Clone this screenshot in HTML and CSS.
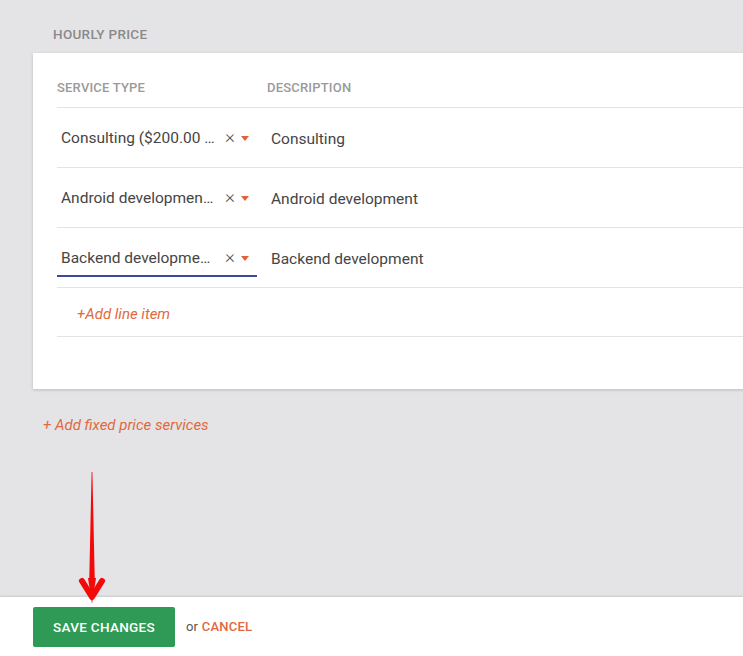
FILE: index.html
```html
<!DOCTYPE html>
<html>
<head>
<meta charset="utf-8">
<link rel="stylesheet" href="styles.css">
</head>
<body>
<div class="page">
  <div class="section-title">HOURLY PRICE</div>
  <div class="card">
    <div class="thead">
      <div class="col-type">SERVICE TYPE</div>
      <div class="col-desc">DESCRIPTION</div>
    </div>
    <div class="row">
      <div class="col-type">
        <div class="select"><span class="sel-text">Consulting ($200.00 …</span><span class="clear">×</span><span class="caret"></span></div>
      </div>
      <div class="col-desc"><span class="desc">Consulting</span></div>
    </div>
    <div class="row">
      <div class="col-type">
        <div class="select"><span class="sel-text">Android developmen…</span><span class="clear">×</span><span class="caret"></span></div>
      </div>
      <div class="col-desc"><span class="desc">Android development</span></div>
    </div>
    <div class="row">
      <div class="col-type">
        <div class="select focused"><span class="sel-text">Backend developme…</span><span class="clear">×</span><span class="caret"></span></div>
      </div>
      <div class="col-desc"><span class="desc">Backend development</span></div>
    </div>
    <div class="add-row"><a class="link">+Add line item</a></div>
  </div>
  <div class="add-fixed"><a class="link">+ Add fixed price services</a></div>
</div>
<svg class="arrow" width="30" height="140" viewBox="0 0 30 140">
  <path d="M14.6 2 L15.4 2 L17.8 112 L12.2 112 Z" fill="#f20a0a"/>
  <path d="M5 111 L15 127 L25 111" fill="none" stroke="#f20a0a" stroke-width="6" stroke-linecap="round" stroke-linejoin="round"/>
  <path d="M11 108 L19 108 L15 134 Z" fill="#f20a0a"/>
</svg>
<div class="footer">
  <button class="save">SAVE CHANGES</button>
  <span class="or">or</span>
  <a class="cancel">CANCEL</a>
</div>
</body>
</html>
```
FILE: styles.css
```css
html, body {
  margin: 0;
  padding: 0;
}
body {
  background: #e4e4e6;
  font-family: Roboto, "Noto Sans", sans-serif;
  height: 656px;
  overflow: hidden;
  position: relative;
}
.page {
  padding-left: 33px;
}
.section-title {
  height: 53px;
  box-sizing: border-box;
  padding: 26px 0 0 20px;
  font-size: 13.5px;
  font-weight: 500;
  color: #8a8a8a;
  letter-spacing: 0.3px;
}
.card {
  width: 740px;
  background: #fff;
  box-shadow: 0 1px 3px rgba(0, 0, 0, 0.18);
  padding: 0 0 52px 24px;
  box-sizing: border-box;
}
.thead {
  display: flex;
  align-items: flex-end;
  height: 55px;
  box-sizing: border-box;
  padding-bottom: 12px;
  font-size: 13px;
  font-weight: 500;
  color: #9a9a9a;
  letter-spacing: 0.2px;
  border-bottom: 1px solid #e3e3e3;
}
.col-type {
  width: 210px;
  flex: none;
}
.col-desc {
  flex: 1;
}
.row {
  display: flex;
  align-items: center;
  height: 60px;
  border-bottom: 1px solid #e3e3e3;
  box-sizing: border-box;
  font-size: 15.5px;
  color: #454545;
  padding-top: 3px;
}
.select {
  width: 200px;
  height: 36px;
  box-sizing: border-box;
  display: flex;
  align-items: center;
  padding: 0 8px 0 4px;
  border-bottom: 2px solid transparent;
}
.select.focused {
  border-bottom-color: #3d4a9c;
}
.sel-text {
  flex: 1;
  white-space: nowrap;
  overflow: hidden;
}
.clear {
  width: 14px;
  text-align: center;
  color: #555;
  font-size: 19px;
  font-weight: 300;
  margin-right: 4px;
  margin-top: -4px;
  line-height: 1;
}
.caret {
  width: 0;
  height: 0;
  border-left: 4.5px solid transparent;
  border-right: 4.5px solid transparent;
  border-top: 5px solid #e0613a;
  margin-top: 0;
}
.desc {
  padding-left: 4px;
}
.add-row {
  height: 49px;
  display: flex;
  align-items: center;
  padding-left: 20px;
  padding-top: 3px;
  border-bottom: 1px solid #e3e3e3;
  box-sizing: border-box;
}
.link {
  color: #e0693e;
  font-style: italic;
  font-size: 15px;
}
.add-fixed {
  padding: 26px 0 0 10px;
}
.arrow {
  position: absolute;
  left: 77px;
  top: 470px;
  z-index: 5;
}
.footer {
  position: absolute;
  left: 0;
  right: 0;
  bottom: 0;
  height: 59px;
  background: #fff;
  box-shadow: 0 -1px 2px rgba(0, 0, 0, 0.12);
  display: flex;
  align-items: center;
  padding-left: 33px;
  box-sizing: border-box;
}
.save {
  width: 142px;
  height: 40px;
  border: none;
  border-radius: 2px;
  background: #2f9a55;
  color: #fff;
  font-family: Roboto, "Noto Sans", sans-serif;
  font-size: 13.5px;
  font-weight: 500;
  letter-spacing: 0.3px;
  padding: 0;
}
.or {
  margin-left: 11px;
  font-size: 13px;
  color: #555;
}
.cancel {
  margin-left: 4px;
  font-size: 13px;
  font-weight: 500;
  color: #e0693e;
  letter-spacing: 0.2px;
}
```
